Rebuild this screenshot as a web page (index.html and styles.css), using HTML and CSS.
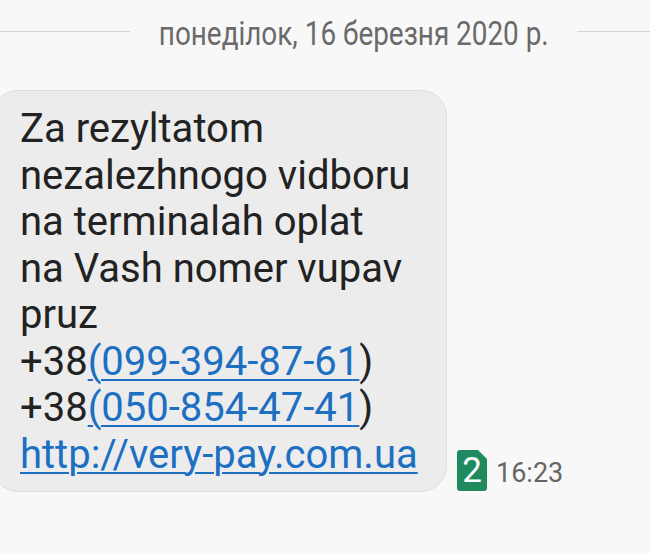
FILE: index.html
```html
<!DOCTYPE html>
<html lang="uk">
<head>
<meta charset="utf-8">
<link rel="stylesheet" href="styles.css">
</head>
<body>
<div class="screen">
  <div class="date-row">
    <div class="rule rule-left"></div>
    <div class="date-box"><span class="date">понеділок, 16 березня 2020 р.</span></div>
    <div class="rule rule-right"></div>
  </div>
  <div class="msg-row">
    <div class="bubble">
      <p class="text">Za rezyltatom<br>nezalezhnogo vidboru<br>na terminalah oplat<br>na Vash nomer vupav<br>pruz<br>+38<a class="link" href="#">(099-394-87-61</a>)<br>+38<a class="link" href="#">(050-854-47-41</a>)<br><a class="link" href="#">http://very-pay.com.ua</a></p>
    </div>
    <div class="meta">
      <div class="sim"><svg class="sim-shape" width="30" height="41" viewBox="0 0 30 41"><path d="M3 0 H21 L30 9 V38 Q30 41 27 41 H3 Q0 41 0 38 V3 Q0 0 3 0 Z" fill="#1f8a5f"/></svg><span class="sim-num">2</span></div>
      <span class="time">16:23</span>
    </div>
  </div>
</div>
</body>
</html>
```
FILE: styles.css
```css
html, body {
  margin: 0;
  padding: 0;
  background: #f8f8f8;
}
.screen {
  width: 650px;
  height: 554px;
  overflow: hidden;
  background: #f8f8f8;
  font-family: Roboto, "Noto Sans", sans-serif;
}
.date-row {
  display: flex;
  align-items: center;
  height: 62px;
}
.rule {
  height: 1px;
  background: #d4d4d4;
}
.rule-left {
  width: 130px;
}
.rule-right {
  flex: 1;
}
.date-box {
  width: 447px;
  display: flex;
  justify-content: center;
  padding-top: 4px;
}
.date {
  display: inline-block;
  font-size: 34px;
  color: #6a6a6a;
  white-space: nowrap;
  transform: scaleX(0.82);
  line-height: 40px;
}
.msg-row {
  display: flex;
  align-items: flex-end;
  margin-top: 28px;
}
.bubble {
  width: 455px;
  margin-left: -8px;
  padding: 15px 0 13px 27px;
  box-sizing: border-box;
  background: #ececec;
  border: 1px solid #dedede;
  border-radius: 26px;
}
.text {
  margin: 0;
  font-size: 40px;
  line-height: 46.5px;
  color: #222222;
  white-space: nowrap;
}
.link {
  color: #1d6fc2;
  text-decoration: underline;
  text-decoration-thickness: 1.5px;
  text-underline-offset: 4px;
}
.meta {
  display: flex;
  align-items: center;
  gap: 9px;
  margin-left: 10px;
  margin-bottom: 1px;
}
.sim {
  position: relative;
  width: 30px;
  height: 41px;
}
.sim-shape {
  display: block;
}
.sim-num {
  position: absolute;
  left: 0;
  right: 0;
  top: 2px;
  text-align: center;
  font-size: 35px;
  line-height: 38px;
  color: #ffffff;
}
.time {
  font-size: 27px;
  color: #666666;
  margin-top: 4px;
}
```
